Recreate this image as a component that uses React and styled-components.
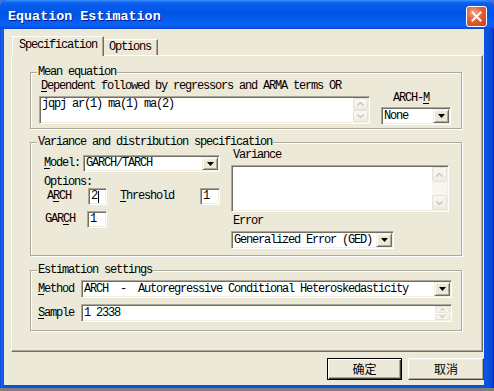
import React from 'react';
import styled, { createGlobalStyle, css } from 'styled-components';

const MONO = `"Liberation Mono", "Courier New", monospace`;
const CJK = `"Noto Sans CJK SC", "Noto Sans CJK TC", "Noto Sans", sans-serif`;

const GlobalStyle = createGlobalStyle`
  html, body { margin: 0; padding: 0; }
  body { background: #7f7f7f; font-family: ${MONO}; }
  * { box-sizing: border-box; }
`;

const Screen = styled.div`
  width: 494px;
  height: 391px;
  background: linear-gradient(to bottom, #3f74d8 0, #3f74d8 12px, #7f7f7f 12px);
  overflow: hidden;
`;

const Window = styled.div`
  width: 494px;
  height: 388px;
  display: flex;
  flex-direction: column;
  border-radius: 8px 8px 0 0;
  overflow: hidden;
  background: linear-gradient(to right, #0831d9 0, #166aee 1px, #0b52e0 4px, #0b52e0 488px, #0a45d0 492px, #0026b8 494px);
`;

const TitleBar = styled.div`
  height: 29px;
  flex-shrink: 0;
  display: flex;
  align-items: flex-start;
  justify-content: space-between;
  padding: 0 7px 0 8px;
  background: linear-gradient(
    to bottom,
    #3d95ff 0%,
    #0a5fef 10%,
    #0054e6 45%,
    #0a62f4 85%,
    #0858e8 94%,
    #0a46d2 100%
  );
`;

const Title = styled.span`
  margin-top: 9px;
  color: #fff;
  font: bold 13.4px/16px ${MONO};
  text-shadow: 1px 1px 0 #0a1883;
  white-space: pre;
`;

const CloseBtn = styled.div`
  margin-top: 6px;
  width: 21px;
  height: 21px;
  border: 1px solid #fff;
  border-radius: 3px;
  background: radial-gradient(circle at 35% 30%, #f2a88c 0%, #e3643f 40%, #c63d17 100%);
  display: flex;
  align-items: center;
  justify-content: center;
`;

const Client = styled.div`
  flex: 1;
  margin: 0 10px 3px 4px;
  background: #ece9d8;
  display: flex;
  flex-direction: column;
  padding: 7px 0 5px 7px;
`;

const TabStrip = styled.div`
  display: flex;
  align-items: flex-end;
  height: 20px;
  padding-left: 1px;
  margin-bottom: -1px;
  position: relative;
  z-index: 1;
`;

const Tab = styled.div`
  font: 12px/13px ${MONO};
  letter-spacing: -1.2px;
  color: #000;
  white-space: pre;
  background: #ece9d8;
  border-top: 1px solid #fff;
  border-right: 1px solid #716f64;
  box-shadow: inset -1px 0 0 #aca899;
  ${(p) =>
    p.$active
      ? css`
          width: 92px;
          height: 20px;
          border-left: 1px solid #fff;
          padding: 2px 0 0 6px;
        `
      : css`
          width: 54px;
          height: 16px;
          margin-bottom: 1px;
          padding: 1px 0 0 5px;
        `}
`;

const Panel = styled.div`
  height: 297px;
  margin-right: 1px;
  background: #ece9d8;
  border: 1px solid;
  border-color: #fff #716f64 #716f64 #fff;
  box-shadow: inset -1px -1px 0 #aca899;
  display: flex;
  flex-direction: column;
  align-items: flex-start;
  padding: 16px 0 0 18px;
`;

const Group = styled.div`
  width: 432px;
  border: 1px solid #aca899;
  box-shadow: 1px 1px 0 #fff, inset 1px 1px 0 #fff;
  display: flex;
  flex-direction: column;
  margin-top: ${(p) => p.$mt || 0}px;
  padding: 0 0 ${(p) => p.$pb}px ${(p) => p.$pl}px;
`;

const Legend = styled.span`
  align-self: flex-start;
  margin: -7px 0 0 ${(p) => p.$ml}px;
  padding: 0 1px;
  height: 13px;
  background: #ece9d8;
  font: 12px/13px ${MONO};
  letter-spacing: -1.2px;
  color: #000;
  white-space: pre;
`;

const Text = styled.span`
  display: block;
  font: 12px/13px ${MONO};
  letter-spacing: -1.2px;
  color: #000;
  white-space: pre;
  flex-shrink: 0;
  ${(p) => p.$w != null && css`width: ${p.$w}px;`}
  margin: ${(p) => `${p.$mt || 0}px 0 0 ${p.$ml || 0}px`};
`;

const U = styled.span`
  text-decoration: underline;
  text-underline-offset: 2px;
`;

const sunken = css`
  background: #fff;
  border: 1px solid;
  border-color: #aca899 #fff #fff #aca899;
  box-shadow: inset 1px 1px 0 #716f64, inset -1px -1px 0 #f1efe2;
  padding: 1px;
  flex-shrink: 0;
`;

const TextBox = styled.div`
  ${sunken};
  width: ${(p) => p.$w}px;
  height: ${(p) => p.$h}px;
  margin-top: ${(p) => p.$mt || 0}px;
  display: flex;
`;

const BoxText = styled.span`
  flex: 1;
  font: 12px/13px ${MONO};
  letter-spacing: -1.2px;
  color: #000;
  white-space: pre;
  padding-left: 1px;
`;

const ScrollCol = styled.div`
  width: 15px;
  display: flex;
  flex-direction: column;
  justify-content: space-between;
  background: #f7f6f1;
`;

const ScrollBtn = styled.div`
  height: ${(p) => p.$h}px;
  border: 1px solid #e4e2d8;
  border-radius: 2px;
  background: linear-gradient(to bottom, #f8f7f3, #efede4);
  display: flex;
  align-items: center;
  justify-content: center;
`;

const Combo = styled.div`
  ${sunken};
  width: ${(p) => p.$w}px;
  height: ${(p) => p.$h}px;
  margin-top: ${(p) => p.$mt || 0}px;
  display: flex;
  align-items: stretch;
`;

const FieldText = styled.span`
  flex: 1;
  display: flex;
  align-items: center;
  padding-left: 1px;
  font: 12px/13px ${MONO};
  letter-spacing: -1.2px;
  color: #000;
  white-space: pre;
`;

const DropBtn = styled.span`
  width: 16px;
  flex-shrink: 0;
  background: #ece9d8;
  border: 1px solid;
  border-color: #f1efe2 #716f64 #716f64 #f1efe2;
  box-shadow: inset 1px 1px 0 #fff, inset -1px -1px 0 #aca899;
  display: flex;
  align-items: center;
  justify-content: center;
`;

const Caret = styled.span`
  display: inline-block;
  width: 1px;
  height: 12px;
  background: #000;
  margin-left: 1px;
`;

const Row = styled.div`
  display: flex;
  align-items: center;
  margin-top: ${(p) => p.$mt || 0}px;
  padding-left: ${(p) => p.$pl || 0}px;
`;

const Cols = styled.div`
  display: flex;
  gap: ${(p) => p.$gap}px;
`;

const Col = styled.div`
  display: flex;
  flex-direction: column;
  width: ${(p) => p.$w}px;
  padding-top: ${(p) => p.$pt || 0}px;
`;

const SpinCol = styled.div`
  width: 15px;
  display: flex;
  flex-direction: column;
  gap: 1px;
`;

const SpinBtn = styled.div`
  flex: 1;
  border: 1px solid #e4e2d8;
  border-radius: 1px;
  background: #f3f2ec;
  display: flex;
  align-items: center;
  justify-content: center;
`;

const ButtonRow = styled.div`
  display: flex;
  justify-content: flex-end;
  gap: 6px;
  margin-top: 6px;
`;

const Button = styled.button`
  width: ${(p) => p.$w}px;
  height: 22px;
  padding: 0;
  margin: 0;
  background: #ece9d8;
  font: 12px/14px ${CJK};
  color: #000;
  border: 1px solid;
  border-color: #fff #404040 #404040 #fff;
  box-shadow: inset -1px -1px 0 #aca899, inset 1px 1px 0 #f1efe2;
  ${(p) =>
    p.$default &&
    css`
      border-color: #000;
      box-shadow: inset 1px 1px 0 #fff, inset -1px -1px 0 #404040, inset -2px -2px 0 #aca899;
    `}
`;

const Chevron = ({ dir, w = 7, h = 4, color = '#c6c3b5' }) => (
  <svg width={w} height={h} viewBox={`0 0 ${w} ${h}`}>
    <polyline
      points={
        dir === 'up'
          ? `0.5,${h - 0.5} ${w / 2},0.5 ${w - 0.5},${h - 0.5}`
          : `0.5,0.5 ${w / 2},${h - 0.5} ${w - 0.5},0.5`
      }
      fill="none"
      stroke={color}
      strokeWidth="1.3"
    />
  </svg>
);

const Tri = () => (
  <svg width="7" height="4" viewBox="0 0 7 4">
    <polygon points="0,0 7,0 3.5,4" fill="#000" />
  </svg>
);

const Select = ({ w, h, mt, children }) => (
  <Combo $w={w} $h={h} $mt={mt}>
    <FieldText>{children}</FieldText>
    <DropBtn>
      <Tri />
    </DropBtn>
  </Combo>
);

const Edit = ({ w, h = 17, children }) => (
  <Combo $w={w} $h={h}>
    <FieldText>{children}</FieldText>
  </Combo>
);

export default function App() {
  return (
    <Screen>
      <GlobalStyle />
      <Window>
        <TitleBar>
          <Title>Equation Estimation</Title>
          <CloseBtn>
            <svg width="11" height="11" viewBox="0 0 11 11">
              <path d="M1.5 1.5 L9.5 9.5 M9.5 1.5 L1.5 9.5" stroke="#fff" strokeWidth="2" strokeLinecap="square" />
            </svg>
          </CloseBtn>
        </TitleBar>
        <Client>
          <TabStrip>
            <Tab $active>Specification</Tab>
            <Tab>Options</Tab>
          </TabStrip>
          <Panel>
            <Group $pl={8} $pb={3}>
              <Legend $ml={-2}>Mean equation</Legend>
              <Cols $gap={11}>
                <Col $w={331}>
                  <Text $ml={2} $mt={1}>
                    <U>D</U>ependent followed by regressors and ARMA terms OR
                  </Text>
                  <TextBox $w={331} $h={28} $mt={3}>
                    <BoxText>jqpj ar(1) ma(1) ma(2)</BoxText>
                    <ScrollCol>
                      <ScrollBtn $h={12}>
                        <Chevron dir="up" />
                      </ScrollBtn>
                      <ScrollBtn $h={12}>
                        <Chevron dir="down" />
                      </ScrollBtn>
                    </ScrollCol>
                  </TextBox>
                </Col>
                <Col $w={70} $pt={13}>
                  <Text $ml={12}>
                    ARCH-<U>M</U>
                  </Text>
                  <Select w={70} h={18} mt={2}>
                    None
                  </Select>
                </Col>
              </Cols>
            </Group>

            <Group $pl={13} $pb={6} $mt={13}>
              <Legend $ml={-7}>Variance and distribution specification</Legend>
              <Cols $gap={11}>
                <Col $w={176} $pt={6}>
                  <Row>
                    <Text $w={39}>
                      <U>M</U>odel:
                    </Text>
                    <Select w={137} h={17}>
                      GARCH/TARCH
                    </Select>
                  </Row>
                  <Text $mt={4}>Options:</Text>
                  <Row $pl={3} $mt={-1}>
                    <Text $w={41}>
                      A<U>R</U>CH
                    </Text>
                    <Edit w={19}>
                      2<Caret />
                    </Edit>
                    <Text $w={80} $ml={13}>
                      <U>T</U>hreshold
                    </Text>
                    <Edit w={20}>1</Edit>
                  </Row>
                  <Row $pl={1} $mt={6}>
                    <Text $w={42}>
                      GAR<U>C</U>H
                    </Text>
                    <Edit w={20}>1</Edit>
                  </Row>
                </Col>
                <Col $w={218}>
                  <Text $ml={2}>Variance</Text>
                  <TextBox $w={218} $h={47} $mt={3}>
                    <BoxText />
                    <ScrollCol>
                      <ScrollBtn $h={15}>
                        <Chevron dir="up" />
                      </ScrollBtn>
                      <ScrollBtn $h={15}>
                        <Chevron dir="down" />
                      </ScrollBtn>
                    </ScrollCol>
                  </TextBox>
                  <Text $ml={2} $mt={3}>
                    Error
                  </Text>
                  <Select w={163} h={18} mt={3}>
                    Generalized Error (GED)
                  </Select>
                </Col>
              </Cols>
            </Group>

            <Group $pl={7} $pb={8} $mt={14}>
              <Legend $ml={-1}>Estimation settings</Legend>
              <Row $mt={3}>
                <Text $w={43}>
                  <U>M</U>ethod
                </Text>
                <Select w={371} h={18}>
                  {'ARCH  -  Autoregressive Conditional Heteroskedasticity'}
                </Select>
              </Row>
              <Row $mt={6}>
                <Text $w={43}>
                  <U>S</U>ample
                </Text>
                <Combo $w={371} $h={18}>
                  <FieldText>1 2338</FieldText>
                  <SpinCol>
                    <SpinBtn>
                      <Chevron dir="up" w={5} h={3} color="#cfccc0" />
                    </SpinBtn>
                    <SpinBtn>
                      <Chevron dir="down" w={5} h={3} color="#cfccc0" />
                    </SpinBtn>
                  </SpinCol>
                </Combo>
              </Row>
            </Group>
          </Panel>
          <ButtonRow>
            <Button $w={75} $default>
              确定
            </Button>
            <Button $w={76}>取消</Button>
          </ButtonRow>
        </Client>
      </Window>
    </Screen>
  );
}
